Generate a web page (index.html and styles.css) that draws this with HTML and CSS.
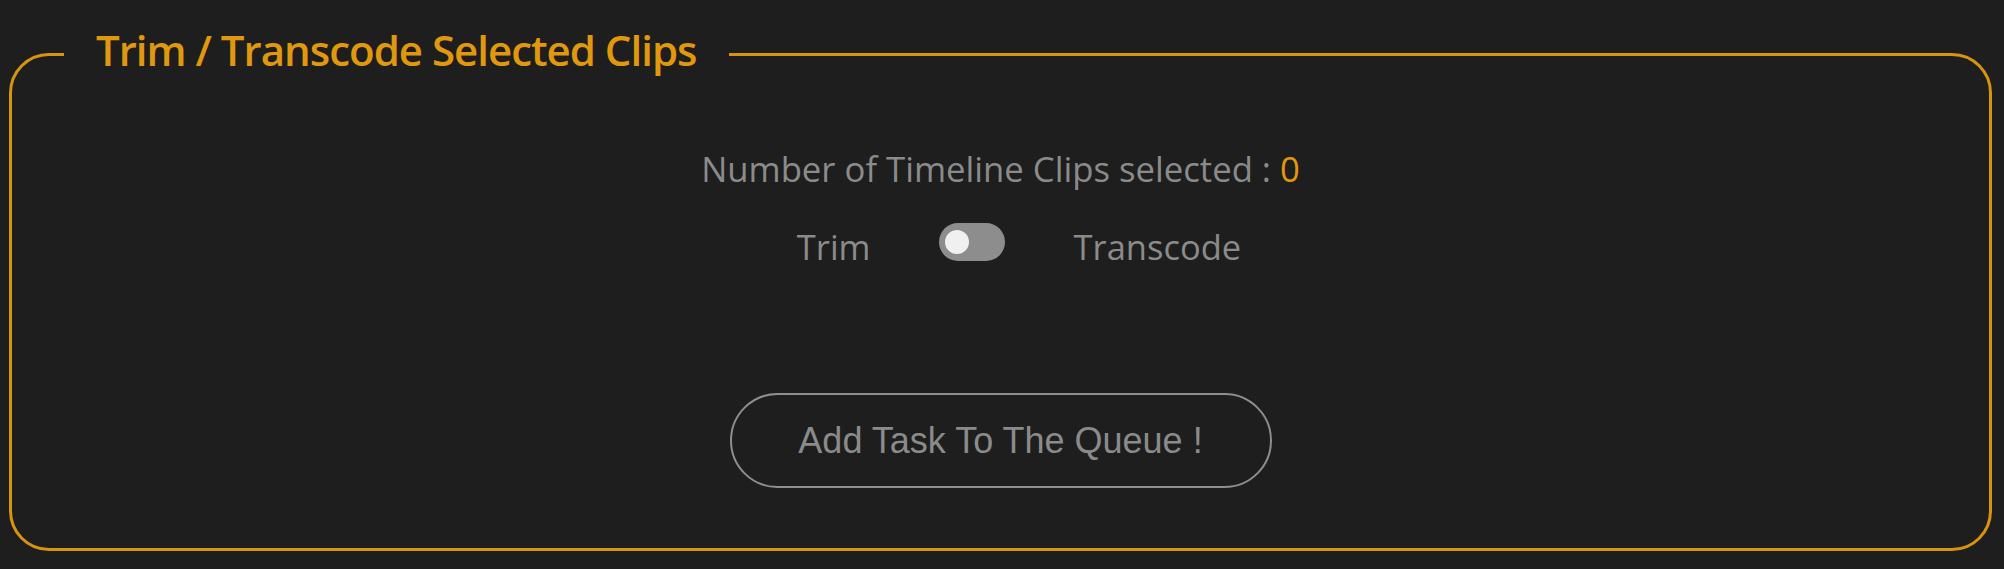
FILE: index.html
```html
<!DOCTYPE html>
<html lang="en">
<head>
<meta charset="utf-8">
<title>Trim / Transcode Selected Clips</title>
<link rel="stylesheet" href="styles.css">
</head>
<body>
<div class="page">
  <fieldset class="panel">
    <legend class="panel-title">Trim / Transcode Selected Clips</legend>
    <div class="panel-body">
      <p class="count">Number of Timeline Clips selected : <span class="count-value">0</span></p>
      <div class="mode-row">
        <span class="mode-label">Trim</span>
        <span class="toggle"><span class="toggle-knob"></span></span>
        <span class="mode-label">Transcode</span>
      </div>
      <button class="add-btn" type="button">Add Task To The Queue !</button>
    </div>
  </fieldset>
</div>
</body>
</html>
```

FILE: styles.css
```css
html, body {
  margin: 0;
  padding: 0;
  background: #1e1e1e;
}

.page {
  box-sizing: border-box;
  height: 569px;
  padding: 21px 12px 18px 9px;
  display: flex;
  flex-direction: column;
}

.panel {
  flex: 1;
  margin: 0;
  min-width: 0;
  border: 3px solid #d6940f;
  border-radius: 40px;
  padding: 0 52px;
  display: flex;
  flex-direction: column;
}

.panel-title {
  padding: 0 32px 9px;
  font-family: "Open Sans", sans-serif;
  font-weight: 600;
  font-size: 42px;
  letter-spacing: -1px;
  color: #e0980f;
}

.panel-body {
  display: flex;
  flex-direction: column;
  align-items: center;
  padding-top: 58px;
}

.count {
  margin: 0;
  font-family: "Open Sans", sans-serif;
  font-size: 34.7px;
  line-height: 47px;
  color: #8b8b8b;
}

.count-value {
  color: #e0980f;
}

.mode-row {
  margin-top: 31px;
  display: flex;
  align-items: center;
  padding-left: 37px;
}

.mode-label {
  font-family: "Open Sans", sans-serif;
  font-size: 34.5px;
  line-height: 47px;
  color: #8b8b8b;
}

.toggle {
  box-sizing: border-box;
  width: 66px;
  height: 38px;
  border-radius: 19px;
  background: #8d8d8d;
  display: flex;
  align-items: center;
  padding-left: 6px;
  margin: 0 69px 9px 68px;
}

.toggle-knob {
  width: 24px;
  height: 24px;
  border-radius: 50%;
  background: #f0f0f0;
}

.add-btn {
  box-sizing: border-box;
  margin-top: 123px;
  width: 542px;
  height: 95px;
  border: 2px solid #8e8e8e;
  border-radius: 48px;
  background: transparent;
  font-family: "Liberation Sans", Arial, sans-serif;
  font-size: 36px;
  color: #8b8b8b;
  padding: 0;
}
```
